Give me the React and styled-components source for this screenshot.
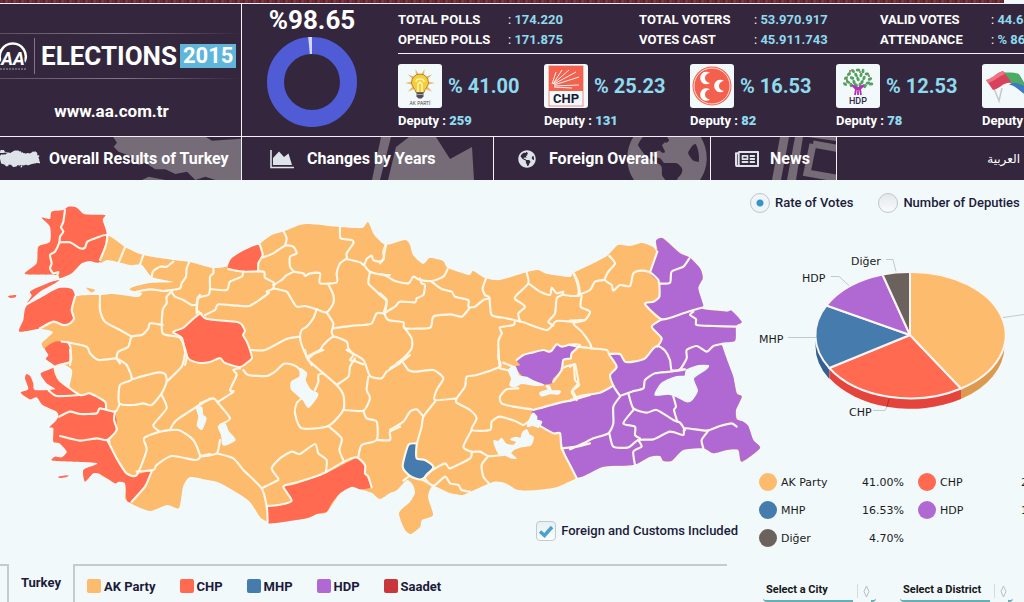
import React from "react";
import styled, { createGlobalStyle } from "styled-components";
import { FaGlobeAmericas, FaRegNewspaper } from "react-icons/fa";

const color = {
  page: "#f1f9fb",
  panel: "#34273d",
  line: "#f4f0f7",
  ghost: "#756c78",
  icon: "#dde3e8",
  sky: "#8fdaee",
  ak: "#fdbb6d",
  chp: "#ff6a50",
  mhp: "#457bad",
  hdp: "#b069d2",
  other: "#6b625e",
  saadet: "#c8373b",
  border: "#fff7e8",
  rule: "#c2ccd1",
  ink: "#1c1b3a",
};

const GlobalStyle = createGlobalStyle`
  *, *::before, *::after { box-sizing: border-box; }
  body {
    margin: 0;
    background: ${color.page};
    font-family: Roboto, "Liberation Sans", sans-serif;
    color: ${color.ink};
  }
`;

const Page = styled.div`
  min-height: 100vh;
  display: flex;
  flex-direction: column;
  overflow: hidden;
`;

const TopStrip = styled.div`
  height: 3px;
  margin-right: 20px;
  flex: none;
  background: repeating-linear-gradient(90deg, #6d2a33 0 3px, #5c222c 3px 5px, #7b3440 5px 8px);
`;

const Header = styled.header`
  display: grid;
  grid-template-columns: 242px minmax(0, 1fr);
  height: 133px;
  flex: none;
  background: ${color.panel};
  border-top: 1px solid ${color.line};
  color: #fff;
`;

const Brand = styled.div`
  display: flex;
  flex-direction: column;
  align-items: center;
  border-right: 1px solid ${color.line};
  padding-top: 29px;
  gap: 20px;
`;

const LogoBand = styled.div`
  display: flex;
  align-items: center;
  width: 100%;
  height: 46px;
  gap: 3px;
  background:
    linear-gradient(90deg, #5d5061, #85758a 50%, ${color.panel}) top / 100% 1px no-repeat,
    linear-gradient(90deg, #5d5061, #85758a 50%, ${color.panel}) bottom / 100% 1px no-repeat;
`;

const AgencyMark = styled.svg`
  display: block;
  width: 38px;
  height: 40px;
  flex: none;
`;

const BrandName = styled.span`
  font-size: 26px;
  line-height: 24px;
  font-weight: 700;
`;

const BrandYear = styled.span`
  background: #5fb5da;
  font-size: 22px;
  line-height: 24px;
  font-weight: 700;
  padding: 0 3px;
`;

const SiteLink = styled.a`
  color: #fff;
  text-decoration: none;
  font-size: 17px;
  line-height: 24px;
  font-weight: 700;
  margin-right: 18px;
`;

const Summary = styled.div`
  display: grid;
  grid-template-columns: 140px minmax(0, 1fr);
  column-gap: 16px;
  min-width: 0;
`;

const Opened = styled.div`
  display: flex;
  flex-direction: column;
  align-items: center;
  padding-top: 4px;
`;

const OpenedRate = styled.strong`
  font-size: 26px;
  line-height: 24px;
  margin-bottom: 5px;
`;

const Figures = styled.div`
  min-width: 0;
`;

const Totals = styled.dl`
  margin: 0;
  padding: 6px 0 3px;
  display: grid;
  grid-template-columns: repeat(3, 241px);
  grid-template-rows: 20px 20px;
  border-bottom: 1px solid ${color.line};
`;

const Total = styled.div`
  display: grid;
  grid-template-columns: ${(p) => p.$label}px 1fr;
  font-size: 13px;
  line-height: 20px;
  font-weight: 700;

  dt, dd { margin: 0; white-space: nowrap; }
  dd { color: ${color.sky}; }
  dd::before { content: ": "; color: #fff; font-weight: 400; }
`;

const Parties = styled.ul`
  list-style: none;
  margin: 0;
  padding: 10px 0 0;
  display: grid;
  grid-template-columns: repeat(5, 146px);
`;

const Party = styled.li`
  display: grid;
  grid-template-columns: 44px 1fr;
  column-gap: 6px;
  align-items: center;
`;

const Emblem = styled.svg`
  display: block;
  width: 44px;
  height: 44px;
  background: ${color.page};
  border-radius: 3px;
  overflow: hidden;
`;

const PartyRate = styled.span`
  color: ${color.sky};
  font-size: 20px;
  line-height: 24px;
  font-weight: 700;
  white-space: nowrap;
`;

const Deputies = styled.span`
  grid-column: 1 / -1;
  margin-top: 3px;
  font-size: 13px;
  line-height: 20px;
  font-weight: 700;
  white-space: nowrap;

  b { color: ${color.sky}; }
`;

const Nav = styled.nav`
  display: flex;
  height: 44px;
  flex: none;
  background: ${color.panel};
  border-top: 1px solid ${color.line};
`;

const NavLink = styled.a`
  position: relative;
  overflow: hidden;
  flex: none;
  display: flex;
  align-items: center;
  gap: ${(p) => p.$gap}px;
  width: ${(p) => p.$width}px;
  padding-left: ${(p) => p.$pad}px;
  border-right: 1px solid ${color.line};
  color: #fff;
  text-decoration: none;
  font-size: 16px;
  font-weight: 700;
  white-space: nowrap;

  span { position: relative; }
  > svg { flex: none; color: ${color.icon}; }
`;

const Backdrop = styled.div`
  position: absolute;
  inset: 0 0 0 auto;
  color: ${color.ghost};

  svg { display: block; }
`;

const Language = styled.a`
  margin-left: auto;
  align-self: center;
  padding-right: 4px;
  color: #fff;
  text-decoration: none;
  font-family: "DejaVu Sans", sans-serif;
  font-size: 12px;
`;

const Main = styled.main`
  flex: 1;
  display: grid;
  grid-template-columns: minmax(0, 1fr) 274px;
  padding-top: 1px;
`;

const MapColumn = styled.section`
  display: flex;
  flex-direction: column;
  min-width: 0;
`;

const CountryMap = styled.svg`
  display: block;
  width: 100%;
  height: auto;
  overflow: visible;
`;

const IncludeRow = styled.div`
  display: flex;
  justify-content: flex-end;
  padding-right: 12px;
  margin-bottom: 23px;
`;

const Choice = styled.label`
  display: flex;
  align-items: center;
  gap: 5px;
  font-size: 13px;
  line-height: 20px;
  font-weight: 500;
  white-space: nowrap;
`;

const RadioInput = styled.input`
  appearance: none;
  margin: 0;
  width: 20px;
  height: 20px;
  flex: none;
  border: 1px solid #bfc5ca;
  border-radius: 50%;
  background: ${(p) =>
    p.defaultChecked
      ? "radial-gradient(circle, #3497c8 0 3px, #eef4f7 4px)"
      : "linear-gradient(#e3e8eb, #fafcfd)"};
`;

const TickBox = styled.span`
  position: relative;
  display: block;
  width: 20px;
  height: 20px;

  svg { position: absolute; inset: 0; pointer-events: none; }
`;

const CheckInput = styled.input`
  appearance: none;
  display: block;
  margin: 0;
  width: 20px;
  height: 20px;
  border: 1px solid #c8c8c5;
  border-radius: 4px;
  background: linear-gradient(#e6f0f4, #fafdfe);
`;

const Results = styled.div`
  flex: 1;
  display: grid;
  grid-template-columns: 9px 64px minmax(0, 1fr);
  padding-right: 23px;
  min-height: 37px;
`;

const PreviousTab = styled.div`
  border-top: 2px solid ${color.rule};
  border-right: 2px solid ${color.rule};
`;

const RegionTitle = styled.h2`
  margin: 0;
  padding: 9px 0 0 12px;
  font-size: 13px;
  line-height: 20px;
  font-weight: 700;
`;

const MapLegend = styled.ul`
  list-style: none;
  margin: 0;
  padding: 10px 0 0 12px;
  display: flex;
  gap: 24px;
  border-top: 2px solid ${color.rule};
  border-left: 2px solid ${color.rule};
`;

const MapKey = styled.li`
  display: flex;
  align-items: center;
  height: 20px;
  gap: 3px;
  font-size: 13px;
  font-weight: 700;
  white-space: nowrap;

  &::before {
    content: "";
    width: 14px;
    height: 14px;
    border-radius: 2px;
    background: ${(p) => p.$tone};
  }
`;

const Side = styled.aside`
  display: flex;
  flex-direction: column;
  min-width: 0;
`;

const ModeSwitch = styled.fieldset`
  display: flex;
  gap: 25px;
  margin: 0 0 27px;
  padding: 12px 0 0;
  border: 0;
`;

const PieChart = styled.svg`
  display: block;
  width: 100%;
  height: auto;

  text { font: 11px "DejaVu Sans", sans-serif; fill: #1b1b1b; }
`;

const PieLegend = styled.ul`
  list-style: none;
  margin: 48px 0 0 9px;
  padding: 0;
  display: grid;
  grid-template-columns: repeat(2, 145px);
  column-gap: 14px;
  grid-auto-rows: 28px;
  font: 11px "DejaVu Sans", sans-serif;
  color: #1b1b1b;
`;

const PieKey = styled.li`
  display: flex;
  align-items: center;
  gap: 4px;

  &::before {
    content: "";
    width: 18px;
    height: 18px;
    border-radius: 50%;
    background: ${(p) => p.$tone};
  }
  span { margin-left: auto; }
`;

const Pickers = styled.form`
  display: flex;
  gap: 24px;
  margin: auto 0 0 13px;
`;

const Picker = styled.div`
  position: relative;
  width: 113px;
  flex: none;

  svg { position: absolute; right: 0; top: 0; pointer-events: none; }
`;

const PickerInput = styled.select`
  appearance: none;
  display: block;
  width: 100%;
  height: 23px;
  padding: 0 20px 0 3px;
  border: 0;
  border-bottom: 2px solid #62b0bd;
  border-radius: 4px;
  background: transparent;
  color: #161616;
  font: 700 11px Roboto, sans-serif;
`;

/* ---------- country map ---------- */

const COUNTRY =
  "107,236 125,247 143,255 173,260 190,262 213,268 228,266 232,258 245,250 258,246 262,242 272,235 285,231 305,224 340,227 362,228 368,222 373,233 377,238 386,245 405,240 410,245 413,255 423,264 430,258 443,261 448,268 469,275 473,271 485,278 500,280 527,272 538,270 547,274 570,277 573,273 590,265 607,256 618,245 630,246 642,243 653,247 657,252 656,241 663,238 680,253 689,257 700,268 703,278 698,288 703,305 703,309 727,312 742,322 736,326 735,341 722,343 728,363 733,377 737,393 742,397 736,410 737,419 743,422 748,426 753,440 760,448 742,462 738,450 727,450 713,453 703,448 683,450 672,461 663,461 660,456 650,457 633,465 603,467 577,478 557,487 537,490 518,490 505,483 493,482 470,492 462,495 450,493 433,486 428,497 433,515 422,520 420,527 411,534 405,530 399,513 410,502 415,493 413,485 407,480 397,490 390,493 380,499 372,493 360,489 352,487 340,493 327,512 317,514 307,518 273,523 268,522 260,517 248,500 220,483 208,480 190,477 183,487 179,508 167,505 150,511 132,504 125,498 125,483 100,474 110,440 70,400 72,370 55,360 60,345 45,349 42,343 53,332 40,328 50,320 75,297 102,295 113,294 137,297 142,293 130,290 133,287 150,283 173,282 152,277 142,265 130,265 118,262 107,260 100,262";

const CAPITAL_WEST =
  "173,332 183,328 192,320 200,314 207,319 237,322 242,325 245,331 243,335 247,342 250,350 252,358 248,362 240,367 225,363 220,358 210,362 200,363 190,360 185,352 182,338";

/* Each tile holds provinces and border lines at three units per map unit. */
const TILES = [
  {
    x: 0,
    y: 195,
    fills: [
      ["chp", "125,68 150,72 155,50 190,45 205,35 230,38 255,58 315,60 308,75 320,120 300,200 270,198 245,205 215,235 180,250 170,240 75,237 110,205 115,155 150,140 150,95"],
      ["chp", "58,410 70,375 78,335 120,310 175,280 215,282 225,305 215,345 222,370 210,385 190,390 160,380 120,400"],
      ["chp", "92,288 150,262 178,255 160,268 120,290 82,323 95,302"],
      ["chp", "24,303 48,300 46,307 32,309"],
      ["ak", "258,278 285,284 275,292"],
    ],
    lines: [
      "195,45 190,80 183,97 190,110 180,125 178,142 165,170 150,180 155,205 150,220 160,235 175,232 165,255",
      "178,142 210,142 240,160 255,158 262,140 290,128 320,120 318,150 300,195",
      "375,157 357,200",
      "430,180 420,208",
      "455,245 460,228 480,215 500,215 520,200",
      "570,197 560,220 558,245 545,265 540,280 515,285 490,288 450,283 410,290",
      "515,290 500,305 500,325 488,345 488,415 540,428 560,480 555,510",
      "515,290 525,305 550,315 575,330 590,330 590,345 605,357",
      "590,330 592,310 600,300",
      "488,390 450,385 445,400 425,420 395,425 385,455 355,470 350,490 360,505",
      "300,302 300,345 315,380 360,405 395,425",
      "225,305 215,345 222,370 210,385 190,390 160,380 120,400",
      "185,440 205,442 260,455 270,475 295,495 350,490",
      "205,442 212,460 210,510",
    ],
  },
  {
    x: 190,
    y: 195,
    fills: [["chp", "115,218 125,190 165,165 205,150 218,180 205,205 200,228 160,230"]],
    lines: [
      "70,218 70,235 60,245 60,282 55,300 25,310 20,355",
      "60,282 110,285 120,260 155,245 160,230",
      "115,222 160,230 220,230 225,248 250,262 250,280 230,290 235,295 180,332 140,332 85,328 75,345 45,360",
      "210,150 218,180 205,205 205,230",
      "220,187 250,175 285,152 310,155 320,175 300,185 300,215 310,230 290,240 275,255 250,270",
      "280,108 290,130 285,152",
      "310,230 340,235 345,243 360,235 390,235 390,265 440,262 440,235 450,205 470,190 470,175 490,145 485,135 452,130 450,97",
      "470,192 510,202 522,210 530,192 545,182 550,195 570,200 580,190 588,150",
      "250,280 290,290 300,305 320,335 345,333 380,343 410,352 430,325 430,300 415,268",
      "522,210 540,230 580,240 600,240",
      "540,230 535,265 555,285 570,300 590,320 580,355",
      "410,352 430,385 425,410 430,425",
      "430,400 490,392 520,390 545,385 560,355 580,355",
      "380,343 370,370 350,395 335,405 330,425 335,450 350,485 365,510",
      "185,465 225,465 290,432 330,425",
      "350,485 390,465 400,450 430,425 470,440 475,460 490,480 480,495 500,500 520,508",
    ],
  },
  {
    x: 380,
    y: 195,
    fills: [],
    lines: [
      "18,147 10,170 12,190 0,205",
      "0,237 15,240 45,258 85,265 100,245 120,255 155,258 190,245 203,222",
      "120,250 125,265 135,270 130,300 110,310 105,322 60,320 45,335 15,355 25,375 70,382 75,400 150,398 160,365 210,358 245,365 268,340",
      "0,295 20,315 15,355",
      "155,260 185,282 215,290 225,305 265,315 265,335 285,335 310,315 328,310",
      "318,250 308,280 315,300 328,308 335,360 380,370 430,382 500,405 530,378 580,380 600,375",
      "440,232 445,265 410,300 405,312 435,335 415,355 420,380",
      "445,265 480,290 510,300 515,278 530,295 550,290 545,300 530,310 525,355 505,380 520,392",
      "550,300 598,302 595,265 582,235",
      "75,400 95,430 95,460 70,490 50,505",
      "405,378 400,390 360,397 365,415 355,440 358,510",
    ],
  },
  {
    x: 570,
    y: 220,
    fills: [
      ["hdp", "262,95 258,62 278,55 330,100 358,112 390,145 398,175 385,205 400,255 400,268 470,275 485,272 515,305 498,318 495,362 455,368 458,382 475,430 490,470 500,520 515,530 498,570 500,598 520,605 535,618 550,660 570,685 515,725 505,690 470,690 430,700 400,685 340,690 305,722 280,722 270,708 240,710 190,735 100,740 20,772 -20,685 -30,640 -50,640 -110,600 -110,570 -30,550 30,530 90,518 130,497 120,465 140,440 118,402 150,402 165,425 190,425 225,415 250,385 262,380 275,355 245,320 275,298 225,252 250,245 268,230 268,190 240,157"],
    ],
    lines: [
      "10,160 22,190 25,225 0,228",
      "25,225 60,210 75,185 105,180",
      "118,108 135,130 115,155 105,180 125,195 130,212 150,195 180,198 190,160 215,152 240,157 265,180 268,190 300,188 305,155 340,140 358,115",
      "262,95 240,157",
      "268,190 268,230 250,245 225,252 275,298 340,280 370,270 400,262",
      "370,275 360,285 378,297 380,315 430,318 498,320",
      "275,298 245,320 275,355 262,380",
      "118,402 150,402 165,425 190,425 225,415 250,385 265,378 285,392 300,420 305,450 330,448 350,415 350,390 380,378 410,395 430,378 455,372",
      "35,228 32,260 60,275 45,300 10,310 35,335 60,370 65,385",
      "0,302 40,300",
      "0,375 25,380 65,385 110,390 118,405 140,440 120,465 130,497 150,528",
      "0,542 30,528 90,518 130,497",
      "0,440 15,432 20,455 25,490 8,510 20,535",
      "150,528 185,515 220,505 225,480 255,460 300,455 345,448 330,448",
      "175,520 190,565 230,578 260,570 310,600 330,608 345,630",
      "150,530 130,560 130,610 115,640 70,655 40,670 0,688",
      "190,570 160,610 195,620 195,645 210,655",
      "118,640 130,680 175,682 205,660 250,658 300,635 340,645 345,625 410,632 450,618 485,610 500,620",
      "310,530 318,560 312,570 322,605",
      "205,660 215,680 190,695 195,735",
      "415,632 395,660 400,685",
    ],
    lakes: ["255,525 275,490 320,470 345,468 350,450 385,437 415,437 405,450 370,475 382,512 365,540 350,545 320,530 295,522"],
  },
  {
    x: 0,
    y: 350,
    fills: [
      ["chp", "135,-5 165,-25 205,-23 212,0 212,35 165,50 178,90 240,135 270,130 315,155 318,175 345,185 350,240 322,270 350,325 385,375 455,365 435,410 395,455 380,450 375,400 355,395 345,400 300,372 280,370 255,395 250,360 285,345 285,338 160,332 165,320 185,322 200,305 178,280 160,275 160,235 148,232 165,215 175,200 170,185 128,165 110,142 90,148 62,128 85,118 75,85 80,72 92,80 100,100 105,120 165,118 140,100 122,70 165,50 138,28 145,15"],
      ["chp", "175,380 205,376 200,381 180,384"],
    ],
    lines: [
      "210,0 212,35 165,50 178,90 240,135 270,130 315,155 318,175",
      "145,120 170,138 240,135",
      "350,25 380,45 395,88 360,105 358,160 400,165 430,160 455,165 485,130 500,95 495,72 470,68 395,88",
      "555,10 545,50 500,95",
      "178,200 210,185 240,192 290,190 300,175 345,185 358,165",
      "345,185 342,210 350,240 322,270 290,265 240,272 180,258",
      "322,270 350,325 380,370 410,375 440,300 432,265 480,245 535,240 580,270 600,318 585,330 515,318 470,345 460,360 410,365",
      "485,135 500,175 460,225 480,245",
      "510,240 530,210 630,145",
      "600,318 630,312",
      "455,365 435,410 395,455",
    ],
    lakes: ["590,175 605,172 608,195 618,205 605,238 592,225 597,200"],
  },
  {
    x: 200,
    y: 350,
    fills: [["chp", "203,472 275,455 250,410 280,405 340,385 380,370 470,325 495,345 495,370 515,410 480,418 455,410 420,430 395,460 380,485 350,492 320,505 220,520 203,515"]],
    lines: [
      "130,60 145,75 200,78 225,65 250,42 270,42 290,50 305,65",
      "315,0 325,30 370,70 410,105 430,135 430,180 385,228 305,235 285,190 290,160 305,145",
      "325,25 345,10 370,0",
      "370,70 355,75 355,95 345,120",
      "440,0 490,30 510,78 545,85 560,65 600,40",
      "465,25 450,50 445,80 410,105",
      "505,80 500,120 510,145 490,182 430,180",
      "490,182 500,205 530,215 530,270 485,285 475,320",
      "530,270 570,270 570,245 600,230",
      "385,228 425,265 418,300 432,335",
      "515,412 505,380 495,370 495,345 470,322 432,335 380,365 340,382 280,400 250,410 275,452 235,465 200,468",
      "235,385 215,355 240,325 275,305 300,312 345,282 355,310 380,330 378,365",
      "120,55 100,60 110,75 90,120 100,125 55,155",
      "0,160 40,145 55,160 90,205 60,225",
      "0,320 50,310 60,270",
      "50,310 100,325 130,360 185,415 200,468 203,515",
      "185,415 235,390",
    ],
    lakes: [
      "275,95 300,80 300,55 320,70 315,90 330,118 352,130 350,142 325,172 310,150 275,118",
      "55,230 75,222 85,245 105,270 70,285 65,255",
    ],
  },
  {
    x: 390,
    y: 350,
    fills: [
      ["hdp", "380,30 400,15 425,8 460,0 475,5 485,2 500,-17 515,-10 540,-16 570,-15 545,10 542,25 520,30 515,60 490,85 485,100 460,103 430,90 400,80 385,65 375,50 390,45"],
      ["mhp", "55,285 78,280 80,325 105,330 130,352 95,388 60,378 38,350"],
    ],
    lines: [
      "0,55 35,35 55,60 80,65 130,60 160,85 140,120 135,150 200,145",
      "35,35 60,15",
      "325,0 325,25 330,50 260,75 230,80 225,110 200,145 200,158 240,180 260,205 245,240 300,240 305,215 330,200 380,215 400,225 430,205",
      "330,55 370,65",
      "340,38 370,50",
      "385,115 350,118 330,140 335,160 370,170 425,178",
      "430,180 510,158 550,150 600,135",
      "380,30 400,15 425,8 460,0 475,5 485,2 500,-17 515,-10 540,-16 570,-15 545,10 542,25 520,30 515,60 490,95",
      "515,55 550,45 555,90 568,105 545,125 560,150",
      "245,240 220,290 245,305 270,305 295,318 340,315",
      "245,305 240,325 180,355 165,340 120,365 105,385 130,408 165,380 180,400 205,405 215,420 240,425",
      "295,318 275,345 280,380 297,400",
      "445,225 490,250 510,250 515,295 540,345 560,385",
      "515,295 560,290 600,280",
      "135,155 100,200 95,230 80,285 80,325 105,330 130,352 95,388 60,378 38,350 55,285 80,280",
      "0,240 40,215 60,185 80,178 100,200",
      "95,388 130,408",
      "40,392 58,378",
    ],
    lakes: [
      "355,60 375,50 385,75 395,80 410,82 430,93 440,97 460,105 430,105 395,100 375,110 360,105 365,85",
      "450,128 475,118 468,108 478,108 485,122 510,123 505,132 480,131 455,138",
      "312,272 325,275 335,265 345,280 355,285 372,285 380,275 362,268 378,262 392,265 398,248 410,240 418,255 430,262 422,285 395,290 372,298 362,310 378,325 360,322 345,315 330,315 318,295",
      "428,190 440,200 440,210 455,215 445,232 428,226 412,228",
    ],
  },
];

/* Turns a point list into a path whose corners are gently rounded. */
function curve(points, closed) {
  const p = points.split(" ").map((pair) => pair.split(",").map(Number));
  const n = p.length;
  const at = (i) => (closed ? p[(i + n) % n] : p[Math.max(0, Math.min(n - 1, i))]);
  const k = 9;
  let d = `M${p[0]}`;
  for (let i = 0; i < (closed ? n : n - 1); i += 1) {
    const [a, b, c, e] = [at(i - 1), at(i), at(i + 1), at(i + 2)];
    d += `C${b[0] + (c[0] - a[0]) / k},${b[1] + (c[1] - a[1]) / k} ${c[0] - (e[0] - b[0]) / k},${c[1] - (e[1] - b[1]) / k} ${c}`;
  }
  return closed ? `${d}Z` : d;
}

function TurkeyMap() {
  return (
    <CountryMap viewBox="0 181 750 340" role="img" aria-label="Winning party by province">
      <path d={curve(COUNTRY, true)} fill={color.ak} />
      <path d={curve(CAPITAL_WEST, true)} fill={color.chp} stroke={color.border} strokeWidth="2" strokeLinejoin="round" />
      {TILES.map((t) => (
        <g key={`f${t.x}-${t.y}`} transform={`translate(${t.x} ${t.y}) scale(0.33333)`}>
          {t.fills.map(([tone, points]) => (
            <path key={points} d={curve(points, true)} fill={color[tone]} />
          ))}
        </g>
      ))}
      {TILES.map((t) => (
        <g key={`l${t.x}-${t.y}`} transform={`translate(${t.x} ${t.y}) scale(0.33333)`}>
          {t.lines.map((points) => (
            <path
              key={points}
              d={curve(points, false)}
              fill="none"
              stroke={color.border}
              strokeWidth="6.500"
              strokeLinejoin="round"
              strokeLinecap="round"
            />
          ))}
          {(t.lakes || []).map((points) => (
            <path key={points} d={curve(points, true)} fill={color.page} stroke={color.page} strokeWidth="4" strokeLinejoin="round" />
          ))}
        </g>
      ))}
    </CountryMap>
  );
}

/* ---------- party emblems ---------- */

function AkEmblem() {
  return (
    <Emblem viewBox="0 0 44 44" aria-hidden="true">
      <g fill="#f0b565">
        {[-126, -90, -54, -18, 18, 54, 90, 126].map((a) => (
          <path key={a} d="M20.500 11 L22 4 L23.500 11Z" transform={`rotate(${a} 22 19)`} />
        ))}
      </g>
      <path d="M22 10a8.500 8.500 0 0 0-8.500 8.500c0 4 3.500 5.500 4.500 10h8c1-4.500 4.500-6 4.500-10A8.500 8.500 0 0 0 22 10z" fill="#f7cf35" stroke="#8b7439" strokeWidth=".8" />
      <path d="M18 18c0-4 8-4 8 0M20 28v-8l2-2 2 2v8" fill="none" stroke="#fff6bd" strokeWidth="1.500" />
      <path d="M18.500 28.500h7v4l-2 2h-3l-2-2z" fill="#554c58" />
      <path d="M18.500 30.500h7" stroke="#bbb" strokeWidth=".8" />
      <text x="22" y="41" textAnchor="middle" fontFamily="Roboto, sans-serif" fontSize="5" fill="#514a42">AK PARTİ</text>
    </Emblem>
  );
}

function ChpEmblem() {
  return (
    <Emblem viewBox="0 0 44 44" aria-hidden="true">
      <rect x="5" y="2" width="34" height="40" fill="none" stroke="#f28d80" />
      <rect x="5" y="2" width="34" height="25" fill="#f4624f" />
      <g stroke="#fff" strokeWidth=".9">
        <path d="M8 20L12 8M9 20L18 6M9 20L25 6M10 20L32 8M10 21L35 13M10 22L35 21M10 23L28 24" />
      </g>
      <text x="22" y="39" textAnchor="middle" fontFamily="Roboto, sans-serif" fontWeight="700" fontSize="13" fill="#1c1a2d">CHP</text>
    </Emblem>
  );
}

function MhpEmblem() {
  const crescent = "M3.500 -5A6.200 6.200 0 1 0 3.500 5A5 5 0 1 1 3.500 -5Z";
  return (
    <Emblem viewBox="0 0 44 44" aria-hidden="true">
      <circle cx="22" cy="22" r="19.500" fill="#f4604e" />
      <circle cx="22" cy="22" r="18" fill="none" stroke="#fff" strokeWidth=".8" />
      <g fill="#fff">
        <path d={crescent} transform="translate(16.500 14)" />
        <path d={crescent} transform="translate(30.500 22)" />
        <path d={crescent} transform="translate(16.500 30.500)" />
      </g>
    </Emblem>
  );
}

const LEAVES = [
  [22, 6], [17, 7], [27, 7], [13, 10], [31, 10], [20, 11], [25, 11], [10, 14], [16, 14], [22, 15],
  [28, 14], [34, 15], [12, 18], [18, 18], [26, 18], [32, 19], [9, 20], [15, 21], [29, 22], [35, 20], [20, 21], [24, 21],
];

function HdpEmblem() {
  return (
    <Emblem viewBox="0 0 44 44" aria-hidden="true">
      {LEAVES.map(([x, y], i) => (
        <ellipse key={i} cx={x} cy={y} rx="2.300" ry="1.500" transform={`rotate(${i * 47} ${x} ${y})`} fill="#4fa35e" />
      ))}
      <g fill="#e0455b">
        <circle cx="14" cy="7" r="1" />
        <circle cx="24" cy="8" r="1" />
        <circle cx="33" cy="12" r="1" />
        <circle cx="11" cy="16" r="1" />
      </g>
      <path d="M19 31l1-6-4-4 4 2 2 3 2-3 4-2-4 4 1 6M22 31v-8" fill="none" stroke="#b12fb0" strokeWidth="1.800" />
      <text x="22" y="40" textAnchor="middle" fontFamily="Roboto, sans-serif" fontWeight="500" fontSize="9" fill="#35273f">HDP</text>
    </Emblem>
  );
}

function OtherEmblem() {
  return (
    <Emblem viewBox="0 0 44 44" aria-hidden="true">
      <path d="M11 22L17 37L20 24" fill="none" stroke="#c5c8ce" strokeWidth="1.500" />
      <path d="M27 21C32 20 37 27 44 31V22L38 12Z" fill="#3c7ac2" />
      <path d="M20 8C26 9 32 8 37 10L44 23C38 20 33 18 28 19Z" fill="#4cab64" />
      <path d="M4 16C10 15 14 9 21 7L30 19C22 17 19 24 11 26Z" fill="#d9425c" />
      <path d="M4 16C10 15 14 9 21 7L23 10C17 12 13 17 6 19Z" fill="#ee7482" />
    </Emblem>
  );
}

const PARTIES = [
  { Logo: AkEmblem, rate: "41.00", deputies: 259 },
  { Logo: ChpEmblem, rate: "25.23", deputies: 131 },
  { Logo: MhpEmblem, rate: "16.53", deputies: 82 },
  { Logo: HdpEmblem, rate: "12.53", deputies: 78 },
  { Logo: OtherEmblem, rate: "4.70", deputies: 0 },
];

const TOTALS = [
  ["TOTAL POLLS", "174.220", 110],
  ["TOTAL VOTERS", "53.970.917", 115],
  ["VALID VOTES", "44.685.391", 111],
  ["OPENED POLLS", "171.875", 110],
  ["VOTES CAST", "45.911.743", 115],
  ["ATTENDANCE", "% 86.43", 111],
];

const PIE_KEYS = [
  ["AK Party", "41.00%", color.ak],
  ["CHP", "25.23%", color.chp],
  ["MHP", "16.53%", color.mhp],
  ["HDP", "12.53%", color.hdp],
  ["Diğer", "4.70%", color.other],
];

const MAP_KEYS = [
  ["AK Party", color.ak],
  ["CHP", color.chp],
  ["MHP", color.mhp],
  ["HDP", color.hdp],
  ["Saadet", color.saadet],
];

function Pie() {
  return (
    <PieChart viewBox="750 240 274 180" role="img" aria-label="Rate of votes by party">
      <g strokeLinejoin="round">
        <path d="M815.500 335V346A94.500 63 0 0 0 829.300 379V368Z" fill="#345f93" />
        <path d="M829.300 366V378A94.500 63 0 0 0 961 399V386Z" fill="#e5443c" />
        <path d="M961 386V399A94.500 63 0 0 0 1004.500 346V335Z" fill="#dd9a4f" />
      </g>
      <g stroke="#faf6f6" strokeWidth="2" strokeLinejoin="round">
        <path d="M910 335L961 388.500A94.500 63 0 0 1 829.300 368Z" fill={color.chp} />
        <path d="M910 335L829.300 368A94.500 63 0 0 1 826.500 305.500Z" fill={color.mhp} />
        <path d="M910 335L826.500 305.500A94.500 63 0 0 1 882.500 274.500Z" fill={color.hdp} />
        <path d="M910 335L882.500 274.500A94.500 63 0 0 1 910 272Z" fill={color.other} />
        <path d="M910 335V272A94.500 63 0 0 1 961 388.500Z" fill={color.ak} />
      </g>
      <g fill="none" stroke="#c4c9cb" strokeWidth="1">
        <path d="M886 259.500h7l3 12M831 276.500h8l10 9M788 337.500h28M873 410.500h12l2-4M1003 317.500l21-3" />
        <path d="M887 407l2-8" stroke="#a8352f" />
      </g>
      <text x="851" y="265">Diğer</text>
      <text x="802" y="282">HDP</text>
      <text x="759" y="343">MHP</text>
      <text x="849" y="416">CHP</text>
    </PieChart>
  );
}

function PickerField({ id, label }) {
  return (
    <Picker>
      <PickerInput id={id} aria-label={label} defaultValue="">
        <option value="">{label}</option>
      </PickerInput>
      <svg width="23" height="23" viewBox="0 0 23 23" aria-hidden="true">
        <path d="M4.500 5v14" stroke="#d5dadd" />
        <path d="M11 12.500l2.500-5.500 2.500 5.500-2.500 5.500z" fill="none" stroke="#b9bfc2" />
        <path d="M0 21h18v2H0z" fill={color.page} />
      </svg>
    </Picker>
  );
}

export default function App() {
  return (
    <Page>
      <GlobalStyle />
      <TopStrip />
      <Header>
        <Brand>
          <LogoBand>
            <AgencyMark viewBox="0 0 38 40" aria-hidden="true">
              <path d="M1 28A13 13 0 1 1 24.500 28" transform="translate(0 -2)" fill="none" stroke="#fff" strokeWidth="2.500" />
              <text x="13" y="29" textAnchor="middle" fontFamily="Roboto, sans-serif" fontWeight="700" fontStyle="italic" fontSize="18" fill="#fff" stroke={color.panel} strokeWidth="3" paintOrder="stroke">AA</text>
              <path d="M0 33h26" stroke="#a79fae" strokeDasharray="2 1" />
              <path d="M34.500 2v36" stroke="#85758a" />
            </AgencyMark>
            <BrandName>ELECTIONS</BrandName>
            <BrandYear>2015</BrandYear>
          </LogoBand>
          <SiteLink href="#home">www.aa.com.tr</SiteLink>
        </Brand>
        <Summary>
          <Opened>
            <OpenedRate>%98.65</OpenedRate>
            <svg width="90" height="90" viewBox="0 0 90 90" aria-hidden="true">
              <circle cx="45" cy="45" r="36.500" fill="none" stroke="#4f5cd6" strokeWidth="17" />
              <path d="M41.200 0h3.800v17h-2.200z" fill="#d5d6f5" />
            </svg>
          </Opened>
          <Figures>
            <Totals>
              {TOTALS.map(([name, value, label]) => (
                <Total key={name} $label={label}>
                  <dt>{name}</dt>
                  <dd>{value}</dd>
                </Total>
              ))}
            </Totals>
            <Parties>
              {PARTIES.map(({ Logo, rate, deputies }) => (
                <Party key={rate}>
                  <Logo />
                  <PartyRate>% {rate}</PartyRate>
                  <Deputies>
                    Deputy : <b>{deputies}</b>
                  </Deputies>
                </Party>
              ))}
            </Parties>
          </Figures>
        </Summary>
      </Header>

      <Nav>
        <NavLink href="#turkey" $width={242} $pad={0} $gap={9}>
          <Backdrop>
            <svg width="128" height="43" viewBox="343 411 384 129">
              <path fill="currentColor" d="M343 410H620L640 422L727 416V540H650L620 530L590 540L565 515L530 522L500 508L470 508L440 488L420 495L400 470L360 455L345 440L355 428ZM430 540L450 530L500 540Z" />
            </svg>
          </Backdrop>
          <svg width="40" height="22" viewBox="30 180 720 396" aria-hidden="true">
            <polygon points={COUNTRY} fill="currentColor" />
            <path fill="currentColor" d="M40 215H105L107 270H25ZM20 330L60 288L125 483L50 460Z" />
          </svg>
          <span>Overall Results of Turkey</span>
        </NavLink>
        <NavLink href="#years" $width={252} $pad={28} $gap={13}>
          <Backdrop>
            <svg width="121" height="43" viewBox="373 137 121 43">
              <path fill="currentColor" d="M382 137H392L381 180H373ZM389 180L397 147L410 137H437L451 159L473 147L475 180Z" />
            </svg>
          </Backdrop>
          <svg width="24" height="20" viewBox="0 0 24 20" aria-hidden="true">
            <path d="M1 1V18.500H24" fill="none" stroke="currentColor" strokeWidth="1.600" />
            <path d="M3 16V9L9 2.500L14 8L18.500 4.500L22 16Z" fill="currentColor" />
          </svg>
          <span>Changes by Years</span>
        </NavLink>
        <NavLink href="#foreign" $width={217} $pad={24} $gap={13}>
          <Backdrop>
            <svg width="84" height="43" viewBox="0 20 84 43">
              <FaGlobeAmericas size={82} />
            </svg>
          </Backdrop>
          <FaGlobeAmericas size={18} />
          <span>Foreign Overall</span>
        </NavLink>
        <NavLink href="#news" $width={126} $pad={24} $gap={11}>
          <Backdrop>
            <svg width="64" height="43" viewBox="772 137 64 43">
              <path fill="currentColor" d="M780 137H789L781 180H772ZM795 137H803L796 180H787Z" />
              <path d="M813 144L841 149M813 144L807 173L841 179" fill="none" stroke="currentColor" strokeWidth="7" />
              <path d="M808 137L836 141V137Z" fill="currentColor" />
            </svg>
          </Backdrop>
          <FaRegNewspaper size={24} />
          <span>News</span>
        </NavLink>
        <Language href="#ar" lang="ar">العربية</Language>
      </Nav>

      <Main>
        <MapColumn>
          <TurkeyMap />
          <IncludeRow>
            <Choice>
              <TickBox>
                <CheckInput type="checkbox" defaultChecked />
                <svg width="20" height="20" viewBox="0 0 20 20" aria-hidden="true">
                  <path d="M4 10.500L8.500 14.500L16 6" fill="none" stroke="#4ba3cd" strokeWidth="3.500" />
                </svg>
              </TickBox>
              Foreign and Customs Included
            </Choice>
          </IncludeRow>
          <Results>
            <PreviousTab />
            <RegionTitle>Turkey</RegionTitle>
            <MapLegend>
              {MAP_KEYS.map(([name, tone]) => (
                <MapKey key={name} $tone={tone}>{name}</MapKey>
              ))}
            </MapLegend>
          </Results>
        </MapColumn>

        <Side>
          <ModeSwitch>
            <Choice>
              <RadioInput type="radio" name="mode" defaultChecked />
              Rate of Votes
            </Choice>
            <Choice>
              <RadioInput type="radio" name="mode" />
              Number of Deputies
            </Choice>
          </ModeSwitch>
          <Pie />
          <PieLegend>
            {PIE_KEYS.map(([name, rate, tone]) => (
              <PieKey key={name} $tone={tone}>
                {name}
                <span>{rate}</span>
              </PieKey>
            ))}
          </PieLegend>
          <Pickers>
            <PickerField id="city" label="Select a City" />
            <PickerField id="district" label="Select a District" />
          </Pickers>
        </Side>
      </Main>
    </Page>
  );
}
